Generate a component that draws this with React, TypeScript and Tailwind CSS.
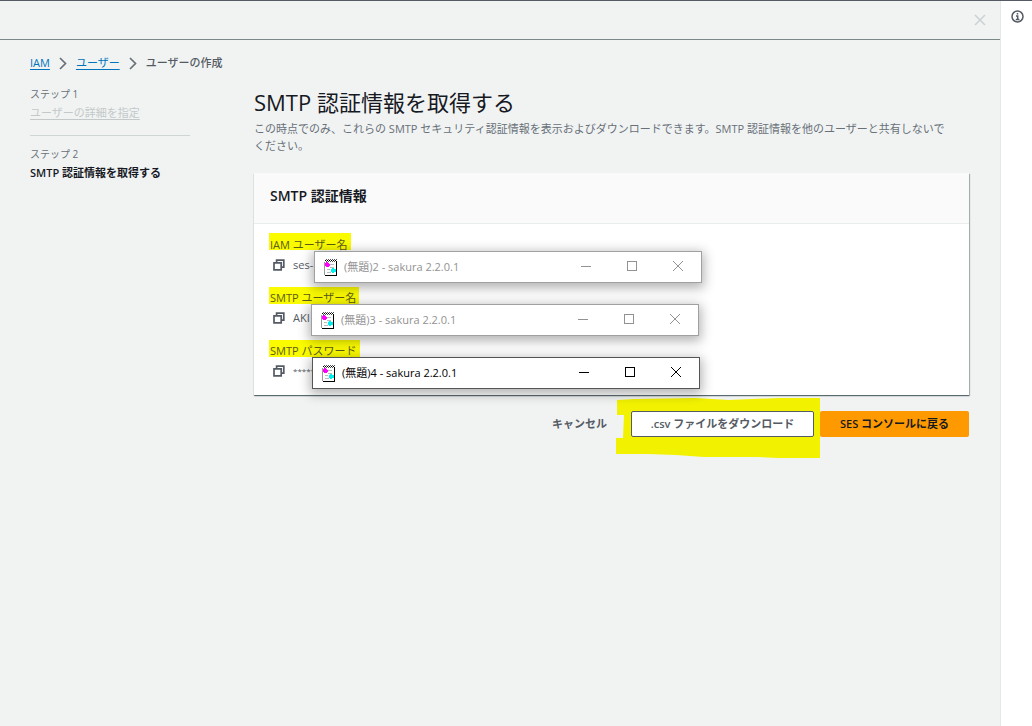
import React from "react";

type FieldProps = {
  label: string;
  value: string;
  windowTitle: string;
  highlight: string;
  windowPlace: string;
  valueSize?: string;
  active?: boolean;
};

function CopyIcon() {
  return (
    <svg width="12" height="12" viewBox="0 0 12 12" fill="none" stroke="#545b64" strokeWidth="1.7" aria-hidden="true">
      <path d="M3.6 3.6V1.1h7.2v7H8.4" />
      <path d="M1 3.9h7.2v7H1z" />
    </svg>
  );
}

function NotepadIcon() {
  return (
    <svg width="14" height="17" viewBox="0 0 14 17" shapeRendering="crispEdges" aria-hidden="true">
      <path d="M0 2h12v14H0z" fill="#fff" />
      <path d="M0 3h1v13H0z" fill="#999" />
      <path d="M12 2h1v14h-1zM1 16h12v1H1z" fill="#000" />
      <path d="M1 1h1v1H1zM3 1h1v1H3zM5 1h1v1H5zM7 1h1v1H7zM9 1h1v1H9zM11 1h1v1h-1z" fill="#000" />
      <path d="M2 0h1v1H2zM4 0h1v1H4zM6 0h1v1H6zM8 0h1v1H8zM10 0h1v1h-1zM12 0h1v1h-1zM2 2h1v1H2zM4 2h1v1H4zM6 2h1v1H6zM8 2h1v1H8zM10 2h1v1h-1z" fill="#555" />
      <path d="M6 5h4v1H6zM6 8h4v1H6zM3 10h3v1H3zM3 13h4v1H3z" fill="#bbb" />
      <path d="M2 3h2v1h1v1h1v2H5v1H2V7H1V4h1z" fill="#f0f" />
      <path d="M8 9h2v1h2v3h-2v1H8v-1H7v-3h1z" fill="#0ee" />
    </svg>
  );
}

function EditorWindow({ title, active, place }: { title: string; active?: boolean; place: string }) {
  const tone = active ? "border-[#555] text-black" : "border-[#a0a0a0] text-[#929292]";
  return (
    <section
      aria-label={title}
      className={`absolute top-3.5 z-10 flex h-8 w-[388px] items-center border bg-white pl-[9px] shadow-[0_3px_12px_2px_rgba(0,0,0,0.3)] ${tone} ${place}`}
    >
      <NotepadIcon />
      <span className="ml-1.5 text-[11px] leading-4">{title}</span>
      <div className="ml-auto flex pb-0.5">
        <button aria-label="最小化" className="flex h-7 w-[46px] items-center justify-center">
          <svg width="10" height="10" stroke="currentColor" fill="none" shapeRendering="crispEdges"><path d="M0 5.5h10" /></svg>
        </button>
        <button aria-label="最大化" className="flex h-7 w-[46px] items-center justify-center">
          <svg width="10" height="10" stroke="currentColor" fill="none" shapeRendering="crispEdges"><path d="M.5.5h9v9h-9z" /></svg>
        </button>
        <button aria-label="閉じる" className="flex h-7 w-[46px] items-center justify-center">
          <svg width="10" height="10" stroke="currentColor" fill="none"><path d="M0 0l10 10M10 0L0 10" /></svg>
        </button>
      </div>
    </section>
  );
}

function Field({ label, value, windowTitle, highlight, windowPlace, valueSize = "text-[11px]", active }: FieldProps) {
  return (
    <div className="relative flex flex-col gap-1">
      <div className={`absolute -left-px h-[17px] bg-[#fbfb00] ${highlight}`} />
      <dt className="relative leading-4 text-[#5c5c14]">{label}</dt>
      <dd className="flex h-4 items-center gap-2 pl-[3px] text-[#545b64]">
        <button aria-label={`${label}をコピー`}><CopyIcon /></button>
        <span className={`leading-4 ${valueSize}`}>{value}</span>
      </dd>
      <EditorWindow title={windowTitle} active={active} place={windowPlace} />
    </div>
  );
}

function Chevron() {
  return (
    <svg width="8" height="14" viewBox="0 0 8 14" fill="none" stroke="#687078" strokeWidth="1.7" aria-hidden="true">
      <path d="M1 2l5.5 5.5L1 13" />
    </svg>
  );
}

export default function App() {
  return (
    <div className="flex min-h-screen border-t border-[#545b64] bg-white font-['Open_Sans','Noto_Sans_CJK_JP',sans-serif] text-[11px] text-[#687078]">
      <div className="min-w-0 flex-1 border-r border-[#e4e8e8] bg-[#f1f3f3]">
        <header className="flex h-[39px] items-center justify-end border-b border-[#7c8787] pr-3.5">
          <button aria-label="閉じる">
            <svg width="12" height="12" fill="none" stroke="#cdd1d1" strokeWidth="1.5"><path d="M1 1l10 10M11 1L1 11" /></svg>
          </button>
        </header>
        <div className="pt-[15px] pr-[31px] pl-[30px]">
          <nav aria-label="パンくずリスト" className="flex items-center gap-[9px] leading-4">
            <a href="#iam" className="text-[#0073bb] underline underline-offset-2">IAM</a>
            <Chevron />
            <a href="#users" className="text-[#0073bb] underline underline-offset-2">ユーザー</a>
            <Chevron />
            <span className="font-medium text-[#545b64]">ユーザーの作成</span>
          </nav>
          <div className="mt-[15px] flex gap-16">
            <ol className="w-40 shrink-0 leading-4">
              <li className="flex flex-col gap-[3px] border-b border-[#d0d5d5] pb-3.5">
                <span className="text-[10px] leading-4">ステップ 1</span>
                <a href="#details" className="text-[#c3c9c9] underline underline-offset-2">ユーザーの詳細を指定</a>
              </li>
              <li className="flex flex-col gap-[3px] pt-2.5">
                <span className="text-[10px] leading-4">ステップ 2</span>
                <span className="font-semibold text-[#16191f]">SMTP 認証情報を取得する</span>
              </li>
            </ol>
            <main className="min-w-0 flex-1 pt-0.5">
              <h1 className="text-[22px] leading-7 font-normal text-[#16191f]">SMTP 認証情報を取得する</h1>
              <p className="mt-1 pr-3.5 leading-[17px]">
                この時点でのみ、これらの SMTP セキュリティ認証情報を表示およびダウンロードできます。SMTP 認証情報を他のユーザーと共有しないでください。
              </p>
              <section className="mt-[19px] bg-white shadow-[0_1px_1px_0_rgba(0,28,36,0.5),1px_1px_1px_0_rgba(0,28,36,0.25)]">
                <div className="border-b border-[#eaeded] bg-[#fafafa] px-4 pt-2.5 pb-3.5">
                  <h2 className="text-[14px] leading-[26px] font-semibold text-[#16191f]">SMTP 認証情報</h2>
                </div>
                <dl className="flex flex-col gap-[17px] px-4 pt-[13px] pb-4">
                  <Field label="IAM ユーザー名" value="ses-" windowTitle="(無題)2 - sakura 2.2.0.1" highlight="-top-1 w-[82px]" windowPlace="left-11" />
                  <Field label="SMTP ユーザー名" value="AKI" windowTitle="(無題)3 - sakura 2.2.0.1" highlight="-top-[3px] w-[90px]" windowPlace="left-[41px]" />
                  <Field label="SMTP パスワード" value="*****" valueSize="text-[8px]" windowTitle="(無題)4 - sakura 2.2.0.1" highlight="-top-[3px] w-[91px]" windowPlace="left-[42px]" active />
                </dl>
              </section>
              <div className="mt-4 flex items-center justify-end font-semibold">
                <button className="h-[26px] px-6 text-[#545b64]">キャンセル</button>
                <div className="relative mr-1.5">
                  <svg className="absolute -top-3.5 -left-[15px]" width="204" height="61" fill="#f2f200" aria-hidden="true">
                    <path d="M1 3l18-1 60-1 34 2 50-2h41v60h-42l-20-1H88l-28-2-28-1H0V41h7l1-23H1z" />
                  </svg>
                  <button className="relative h-[26px] w-[183px] rounded-xs border border-[#545b64] bg-white text-[#545b64]">.csv ファイルをダウンロード</button>
                </div>
                <button className="relative h-[26px] w-[149px] rounded-xs bg-[#ff9900] text-[#16191f]">SES コンソールに戻る</button>
              </div>
            </main>
          </div>
        </div>
      </div>
      <aside className="flex w-[31px] shrink-0 justify-center pt-[9px] pl-px">
        <button aria-label="情報" className="h-3">
          <svg width="13" height="13" viewBox="0 0 13 13" fill="none" stroke="#545b64" strokeWidth="1.5">
            <circle cx="6.5" cy="6.5" r="5.5" />
            <path d="M6.5 3v1.5M5 6h1.7v3.5M4.8 9.5h3.6" />
          </svg>
        </button>
      </aside>
    </div>
  );
}
